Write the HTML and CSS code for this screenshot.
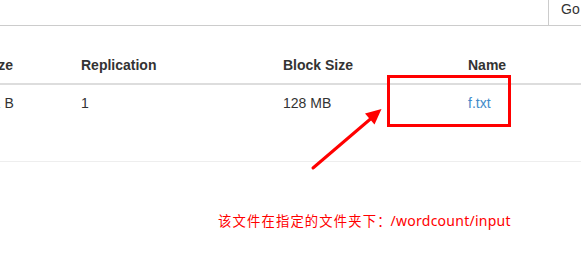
FILE: index.html
```html
<!DOCTYPE html>
<html lang="zh">
<head>
<meta charset="utf-8">
<title>Browse Directory</title>
<link rel="stylesheet" href="styles.css">
</head>
<body>
<div class="page">
  <div class="input-group">
    <input class="path-input" type="text" value="">
    <button class="go-btn" type="button">Go</button>
  </div>

  <table class="listing">
    <colgroup>
      <col class="c-size">
      <col class="c-repl">
      <col class="c-block">
      <col class="c-name">
    </colgroup>
    <thead>
      <tr>
        <th>Size</th>
        <th>Replication</th>
        <th>Block Size</th>
        <th>Name</th>
      </tr>
    </thead>
    <tbody>
      <tr>
        <td>41 B</td>
        <td>1</td>
        <td>128 MB</td>
        <td><a href="#" class="file-link">f.txt</a></td>
      </tr>
    </tbody>
  </table>

  <hr class="divider">

  <p class="note"><span class="note-cjk">该文件在指定的文件夹下</span><span class="colon">：</span><span class="note-path">/wordcount/input</span></p>

  <div class="highlight-box"></div>
  <svg class="arrow" width="581" height="275" viewBox="0 0 581 275" xmlns="http://www.w3.org/2000/svg">
    <line x1="313" y1="168" x2="371" y2="118.5" stroke="#ff0000" stroke-width="3" stroke-linecap="round"/>
    <polygon points="381.5,109 374.5,124.5 365,113.5" fill="#ff0000"/>
  </svg>
</div>
</body>
</html>
```
FILE: styles.css
```css
html, body {
  margin: 0;
  padding: 0;
  background: #fff;
}

body {
  width: 581px;
  height: 275px;
  overflow: hidden;
  font-family: "Liberation Sans", Arial, sans-serif;
  font-size: 14px;
  line-height: 20px;
  color: #333;
}

.page {
  position: relative;
  display: flow-root;
  width: 581px;
  height: 275px;
}

.input-group {
  display: flex;
  margin-top: -8px;
  margin-left: -30px;
  height: 34px;
}

.path-input {
  box-sizing: border-box;
  flex: 0 0 578px;
  width: 578px;
  height: 34px;
  margin: 0;
  padding: 6px 12px;
  border: 1px solid #ccc;
  border-right: none;
  font: inherit;
  outline: none;
}

.go-btn {
  box-sizing: border-box;
  flex: 0 0 auto;
  height: 34px;
  margin: 0;
  padding: 6px 12px;
  border: 1px solid #ccc;
  background: #fff;
  color: #333;
  font-family: "Liberation Sans", Arial, sans-serif;
  font-size: 14px;
  line-height: 20px;
}

.listing {
  margin-top: 21px;
  margin-left: -23px;
  margin-bottom: 20px;
  border-collapse: collapse;
  border-spacing: 0;
  table-layout: fixed;
  width: 683px;
}

.c-size { width: 96px; }
.c-repl { width: 202px; }
.c-block { width: 185px; }
.c-name { width: 200px; }

.listing th,
.listing td {
  padding: 8px;
  text-align: left;
  line-height: 20px;
  white-space: nowrap;
}

.listing th {
  font-weight: bold;
  vertical-align: bottom;
  border-bottom: 2px solid #ddd;
}

.listing td {
  vertical-align: top;
}

.file-link {
  color: #428bca;
  text-decoration: none;
}

.divider {
  margin: 40px 0 0;
  border: 0;
  border-top: 1px solid #eee;
  height: 0;
}

.note {
  margin: 49px 0 0;
  padding-left: 218px;
  color: #ff0000;
  font-family: "Noto Sans", "Noto Sans CJK SC", sans-serif;
  font-size: 13.33px;
  line-height: 20px;
  white-space: nowrap;
}

.note-cjk {
  letter-spacing: 1.15px;
}

.colon {
  display: inline-block;
  width: 13.33px;
  text-align: center;
  font-family: "Noto Sans CJK SC", sans-serif;
}

.note-path {
  font-size: 14px;
  letter-spacing: 0.25px;
}

.highlight-box {
  position: absolute;
  left: 387px;
  top: 75px;
  width: 124px;
  height: 52px;
  box-sizing: border-box;
  border: 3px solid #ff0000;
}

.arrow {
  position: absolute;
  left: 0;
  top: 0;
  pointer-events: none;
}
```
